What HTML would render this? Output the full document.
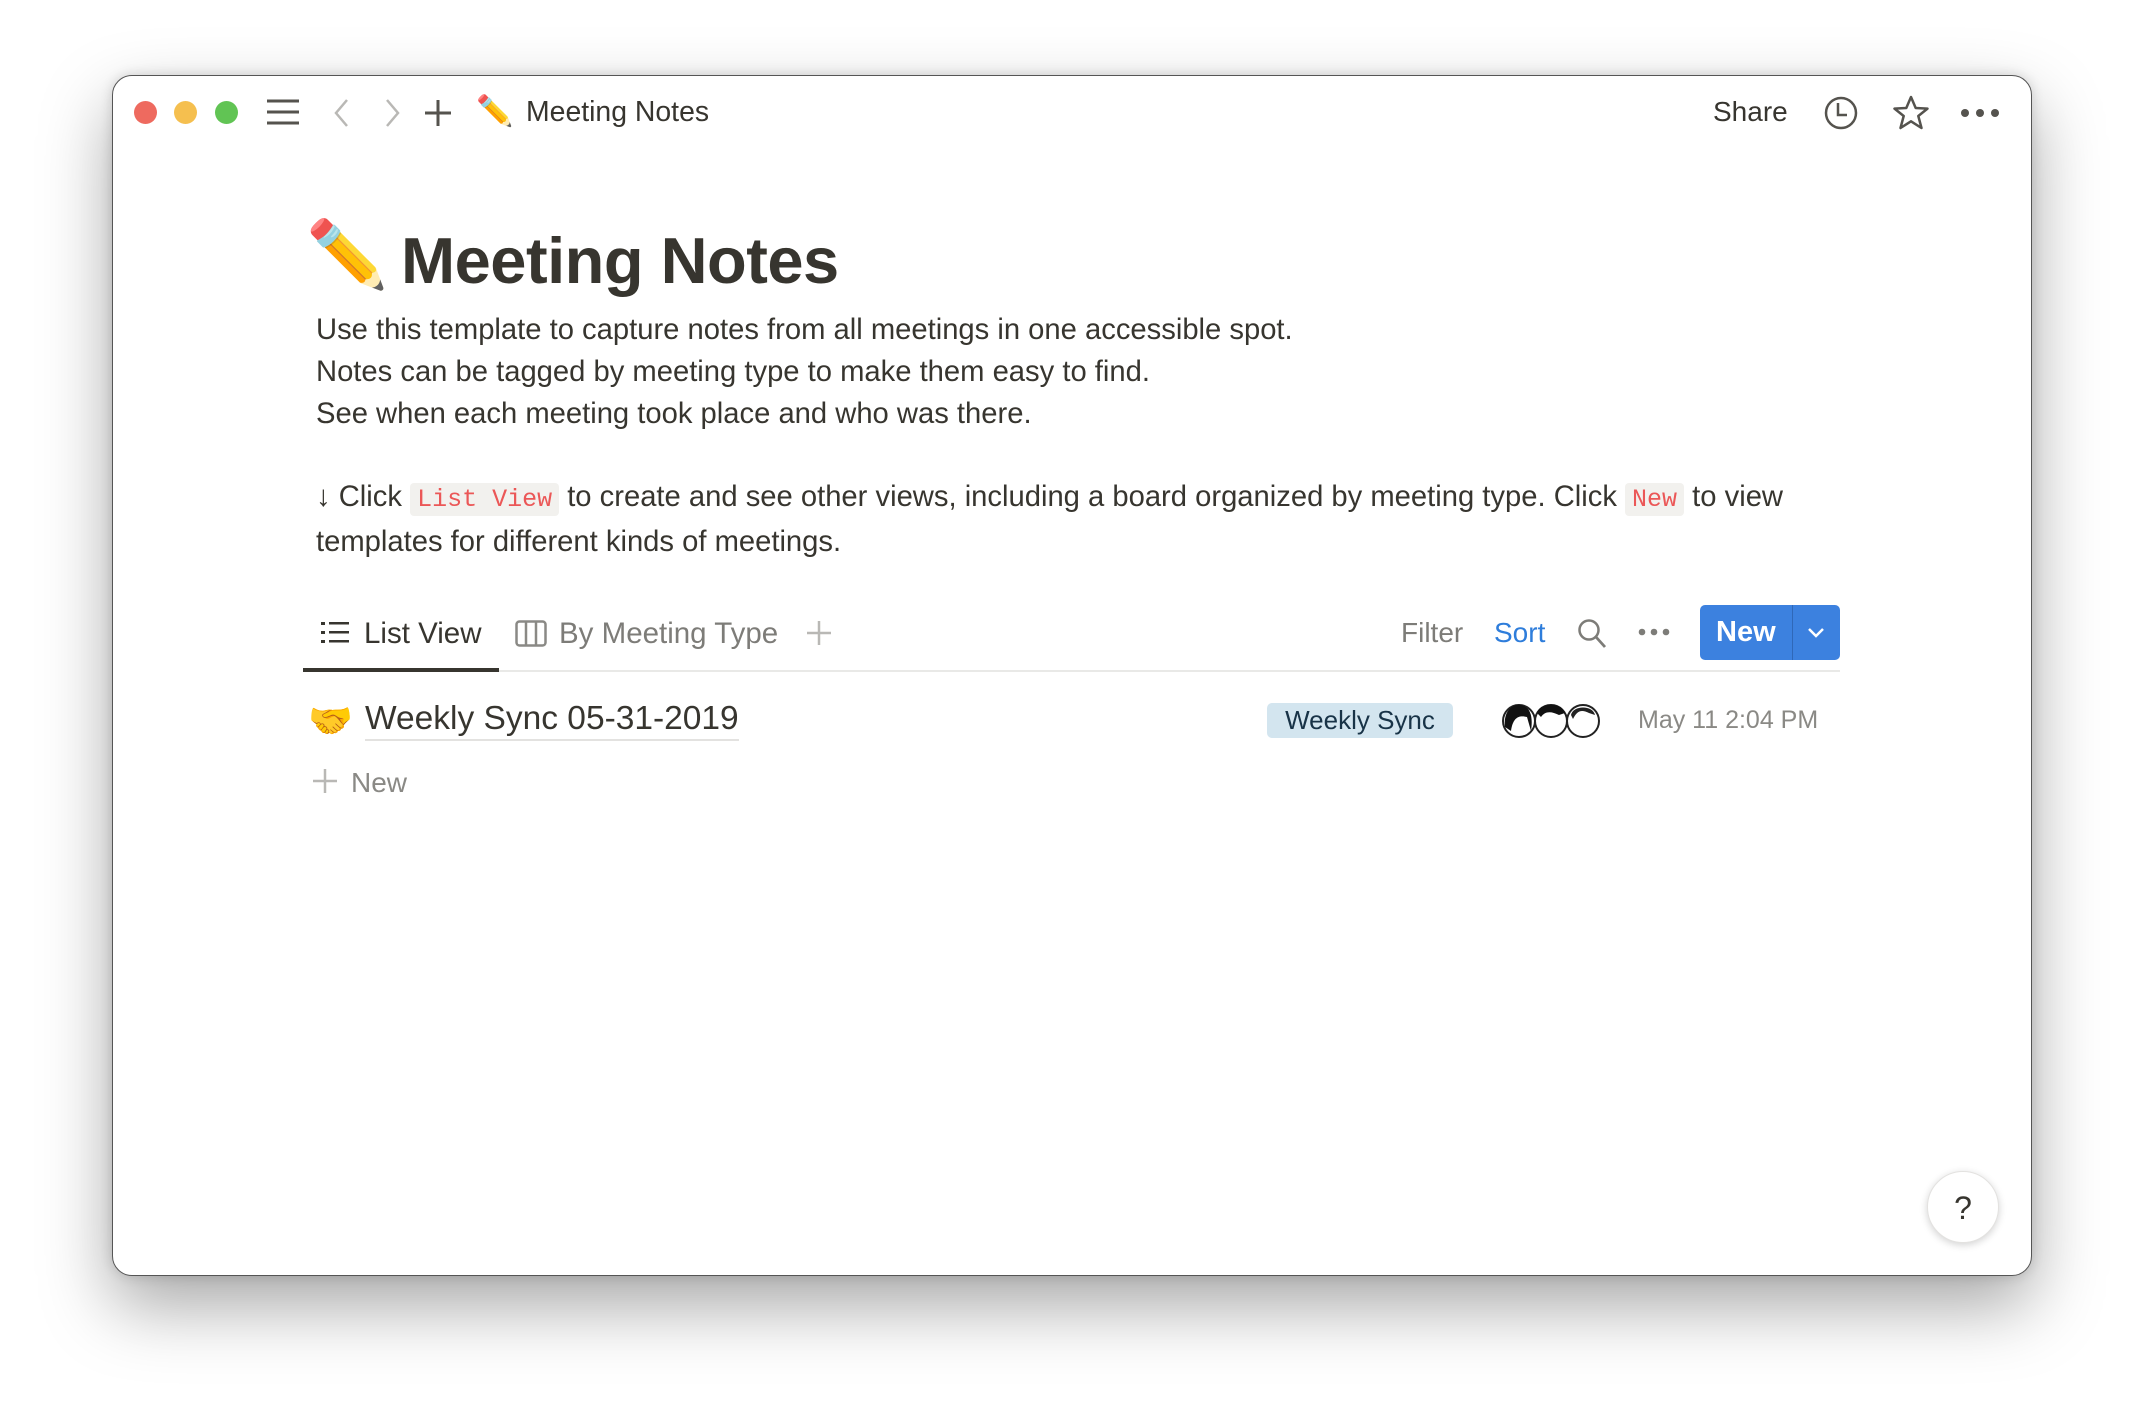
<!DOCTYPE html>
<html><head><meta charset="utf-8"><style>
*{margin:0;padding:0;box-sizing:border-box}
body{width:2144px;height:1424px;background:#fff;font-family:"Liberation Sans",sans-serif;position:relative;overflow:hidden;color:#37352f}
.win{position:absolute;left:112px;top:75px;width:1920px;height:1201px;background:#fff;border-radius:20px;border:1.5px solid #555;box-shadow:0 30px 70px rgba(0,0,0,.35),0 0 12px rgba(0,0,0,.15)}
.a{position:absolute;white-space:nowrap}
.dot{position:absolute;width:23px;height:23px;border-radius:50%;top:101px}
.code{font-family:"Liberation Mono",monospace;color:#eb5757;background:#f2f1ee;border-radius:4px;padding:2px 7px;font-size:25px}
</style></head><body>
<div class="win"></div>
<div class="dot" style="left:134px;background:#ee6a5f"></div>
<div class="dot" style="left:174px;background:#f5bf4f"></div>
<div class="dot" style="left:215px;background:#61c454"></div>
<svg class="a" style="left:266px;top:98px" width="34" height="28"><g stroke="#55534e" stroke-width="3"><line x1="1" y1="3" x2="33" y2="3"/><line x1="1" y1="14" x2="33" y2="14"/><line x1="1" y1="25" x2="33" y2="25"/></g></svg>
<svg class="a" style="left:332px;top:98px" width="20" height="30"><polyline points="15,2 4,15 15,28" fill="none" stroke="#b9b8b5" stroke-width="2.5"/></svg>
<svg class="a" style="left:382px;top:98px" width="20" height="30"><polyline points="5,2 16,15 5,28" fill="none" stroke="#b9b8b5" stroke-width="2.5"/></svg>
<svg class="a" style="left:424px;top:98px" width="28" height="30"><g stroke="#55534e" stroke-width="3"><line x1="14" y1="2" x2="14" y2="28"/><line x1="1" y1="15" x2="27" y2="15"/></g></svg>
<div class="a" style="left:476px;top:94px;font-size:30px">✏️</div>
<div class="a" style="left:526px;top:96px;font-size:28.4px">Meeting Notes</div>
<div class="a" style="left:1713px;top:96px;font-size:28px">Share</div>
<svg class="a" style="left:1823px;top:95px" width="36" height="36"><circle cx="18" cy="18" r="15" fill="none" stroke="#55534e" stroke-width="2.5"/><polyline points="15,8 15,20 24,20" fill="none" stroke="#55534e" stroke-width="2.5"/></svg>
<svg class="a" style="left:1892px;top:94px" width="38" height="38"><polygon points="19,3 23.7,14 35.5,14.6 26.3,22 29.5,34 19,27.3 8.5,34 11.7,22 2.5,14.6 14.3,14" fill="none" stroke="#55534e" stroke-width="2.5" stroke-linejoin="round"/></svg>
<svg class="a" style="left:1960px;top:105px" width="40" height="16"><g fill="#55534e"><circle cx="5" cy="8" r="4"/><circle cx="20" cy="8" r="4"/><circle cx="35" cy="8" r="4"/></g></svg>

<div class="a" style="left:306px;top:216px;font-size:66px">✏️</div>
<div class="a" style="left:401px;top:223px;font-size:65px;font-weight:bold;letter-spacing:-.5px">Meeting Notes</div>
<div class="a" style="left:316px;top:309px;font-size:29.2px;line-height:42px">Use this template to capture notes from all meetings in one accessible spot.<br>Notes can be tagged by meeting type to make them easy to find.<br>See when each meeting took place and who was there.</div>
<div class="a" style="left:316px;top:476px;font-size:29.2px;line-height:42px">↓ Click <span class="code">List View</span> to create and see other views, including a board organized by meeting type. Click <span class="code">New</span> to view<br>templates for different kinds of meetings.</div>

<svg class="a" style="left:321px;top:621px" width="28" height="24"><g fill="#37352f"><rect x="0" y="1" width="4" height="3"/><rect x="0" y="10" width="4" height="3"/><rect x="0" y="19" width="4" height="3"/><rect x="8" y="1" width="20" height="2.5"/><rect x="8" y="10" width="20" height="2.5"/><rect x="8" y="19" width="20" height="2.5"/></g></svg>
<div class="a" style="left:364px;top:617px;font-size:29.5px">List View</div>
<svg class="a" style="left:515px;top:620px" width="32" height="27"><rect x="1.5" y="1.5" width="29" height="24" rx="3" fill="none" stroke="#8a8985" stroke-width="2.5"/><line x1="11" y1="2" x2="11" y2="25" stroke="#8a8985" stroke-width="2.5"/><line x1="21" y1="2" x2="21" y2="25" stroke="#8a8985" stroke-width="2.5"/></svg>
<div class="a" style="left:559px;top:617px;font-size:29.5px;color:#7d7c78">By Meeting Type</div>
<svg class="a" style="left:806px;top:620px" width="26" height="26"><g stroke="#b9b8b5" stroke-width="2.5"><line x1="13" y1="1" x2="13" y2="25"/><line x1="1" y1="13" x2="25" y2="13"/></g></svg>
<div class="a" style="left:1401px;top:617px;font-size:28px;color:#7d7c78">Filter</div>
<div class="a" style="left:1494px;top:617px;font-size:28px;color:#2e7ddb">Sort</div>
<svg class="a" style="left:1577px;top:618px" width="30" height="32"><circle cx="12" cy="12" r="9.5" fill="none" stroke="#7d7c78" stroke-width="2.5"/><line x1="19" y1="19" x2="28" y2="29" stroke="#7d7c78" stroke-width="2.8"/></svg>
<svg class="a" style="left:1638px;top:626px" width="32" height="12"><g fill="#7d7c78"><circle cx="4" cy="6" r="3.3"/><circle cx="16" cy="6" r="3.3"/><circle cx="28" cy="6" r="3.3"/></g></svg>
<div class="a" style="left:1700px;top:605px;width:140px;height:55px;background:#3c81df;border-radius:5px"></div>
<div class="a" style="left:1792px;top:605px;width:1px;height:55px;background:#2f68b8"></div>
<div class="a" style="left:1716px;top:616px;font-size:29px;color:#fff;font-weight:bold">New</div>
<svg class="a" style="left:1807px;top:627px" width="18" height="12"><polyline points="2,2 9,9 16,2" fill="none" stroke="#fff" stroke-width="2.5"/></svg>
<div class="a" style="left:303px;top:670px;width:1537px;height:2px;background:#e9e9e7"></div>
<div class="a" style="left:303px;top:668px;width:196px;height:4px;background:#37352f"></div>

<div class="a" style="left:308px;top:700px;font-size:36px">🤝</div>
<div class="a" style="left:365px;top:700px;font-size:33.5px;border-bottom:2px solid #e3e2e0;padding-bottom:1px">Weekly Sync 05-31-2019</div>
<div class="a" style="left:1267px;top:703px;width:186px;height:35px;background:#d3e5ef;border-radius:5px;font-size:26px;text-align:center;line-height:35px;color:#183347">Weekly Sync</div>
<svg class="a" style="left:1501px;top:701px" width="100" height="40"><g stroke="#222" stroke-width="2" fill="#fff"><circle cx="18" cy="20" r="16"/><circle cx="50" cy="20" r="16"/><circle cx="82" cy="20" r="16"/></g><path d="M4,26 C2,10 12,2 20,4 C30,6 32,16 30,30 L26,16 C18,14 12,16 10,30Z" fill="#111"/><path d="M36,12 C38,2 60,0 64,12 L58,14 C50,10 44,10 40,16Z" fill="#111"/><path d="M70,14 C72,4 92,4 94,14 L88,12 C80,8 76,10 72,18Z" fill="#222"/></svg>
<div class="a" style="left:1638px;top:706px;font-size:25px;color:#8a8985">May 11 2:04 PM</div>
<svg class="a" style="left:312px;top:768px" width="26" height="26"><g stroke="#b9b8b5" stroke-width="2.5"><line x1="13" y1="1" x2="13" y2="25"/><line x1="1" y1="13" x2="25" y2="13"/></g></svg>
<div class="a" style="left:351px;top:767px;font-size:28px;color:#8a8985">New</div>

<div class="a" style="left:1927px;top:1171px;width:72px;height:72px;border-radius:50%;background:#fff;box-shadow:0 2px 8px rgba(0,0,0,.18);border:1px solid #e3e2e0;text-align:center;line-height:72px;font-size:32px">?</div>
</body></html>
